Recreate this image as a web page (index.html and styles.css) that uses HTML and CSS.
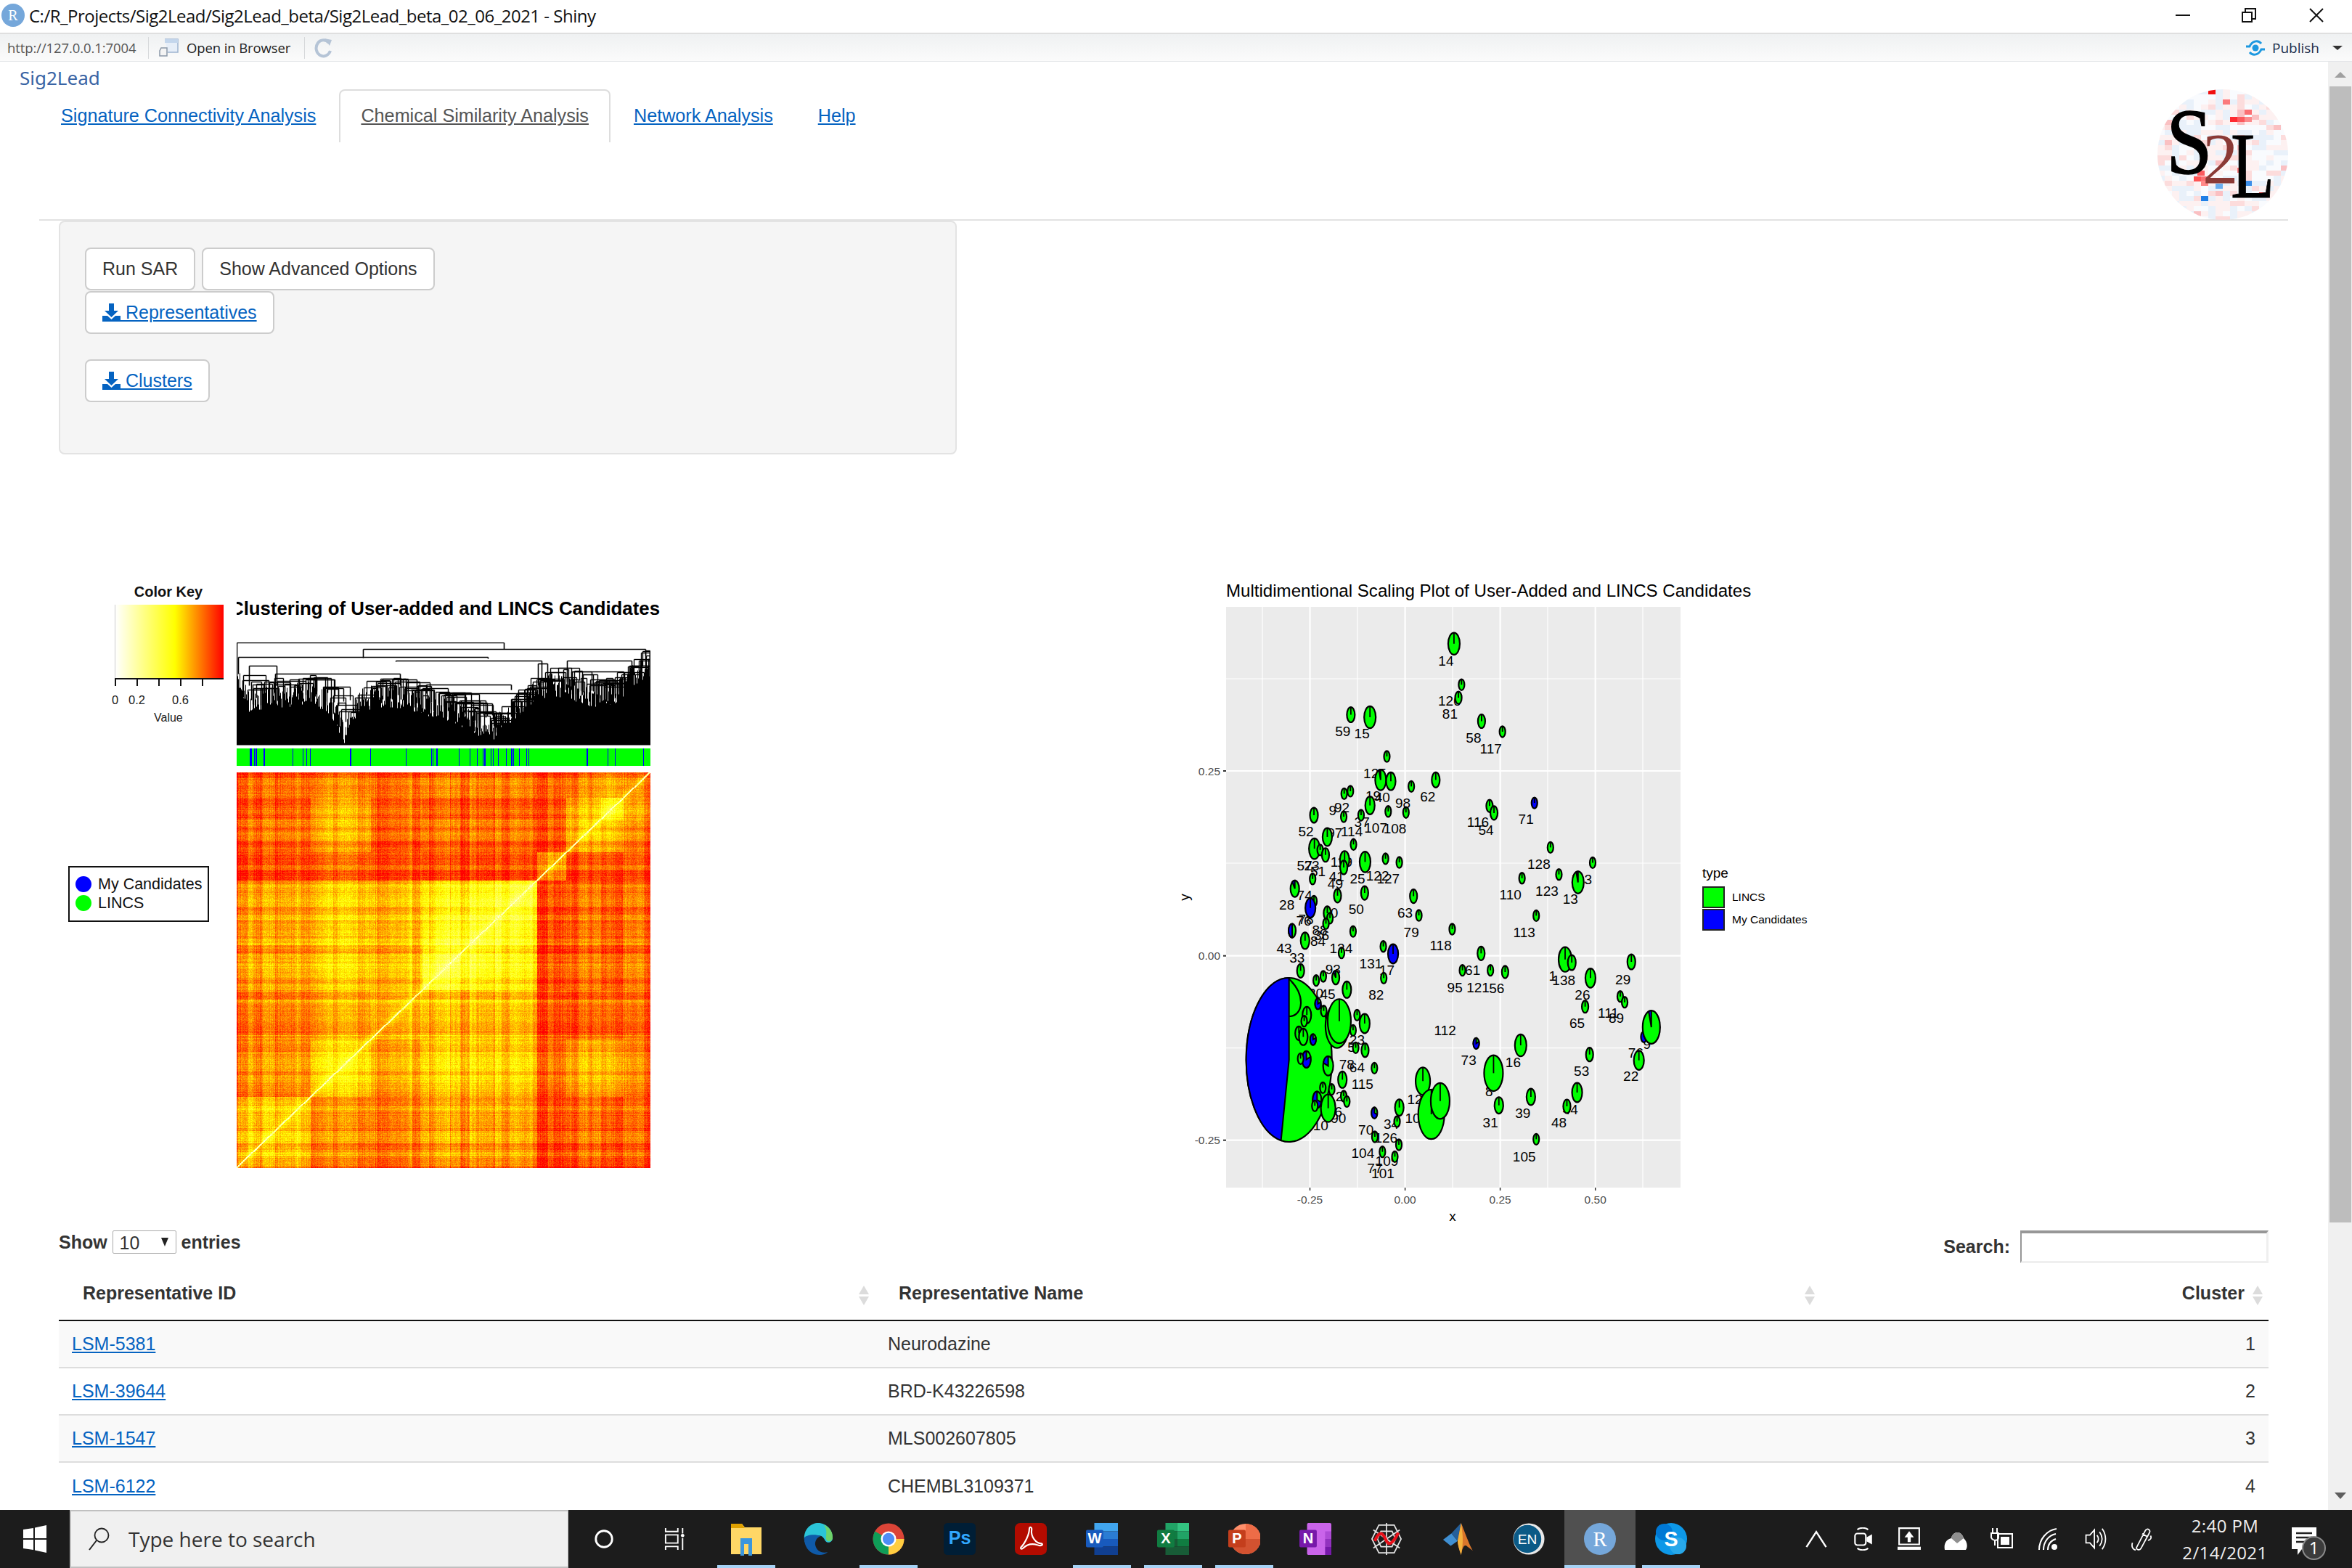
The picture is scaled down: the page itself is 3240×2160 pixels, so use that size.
FILE: index.html
```html
<!DOCTYPE html>
<html lang="en">
<head>
<meta charset="utf-8">
<title>Sig2Lead</title>
<link rel="stylesheet" href="styles.css">
</head>
<body>
<div class="window">
  <header class="titlebar">
    <svg class="r-icon" viewBox="0 0 32 32"><circle cx="16" cy="16" r="16" fill="#75a7da"/><text x="16" y="23" text-anchor="middle" class="r-letter">R</text></svg>
    <span class="title-text">C:/R_Projects/Sig2Lead/Sig2Lead_beta/Sig2Lead_beta_02_06_2021 - Shiny</span>
    <div class="win-controls">
      <svg viewBox="0 0 20 20" class="win-btn min"><path d="M0 10H20" stroke="#111" stroke-width="2"/></svg>
      <svg viewBox="0 0 20 20" class="win-btn restore"><path d="M1 6H14V19H1ZM5 6V1H19V15H14" fill="none" stroke="#111" stroke-width="2"/></svg>
      <svg viewBox="0 0 20 20" class="win-btn close"><path d="M1 1L19 19M19 1L1 19" stroke="#111" stroke-width="2"/></svg>
    </div>
  </header>
  <div class="toolbar">
    <span class="url">http://127.0.0.1:7004</span>
    <span class="tb-sep"></span>
    <svg class="tb-open" viewBox="0 0 28 28"><path d="M8 2H26V20H12" fill="#e6eef8" stroke="#9db4cf" stroke-width="1.5"/><path d="M8 2H26V7H8Z" fill="#c3d6ec"/><path d="M3 14H11V25H1V18Z" fill="#f4f4f4" stroke="#8b98a8" stroke-width="1.5"/></svg>
    <span class="open-text">Open in Browser</span>
    <span class="tb-sep second"></span>
    <svg class="tb-refresh" viewBox="0 0 26 28"><path d="M21 7A10 11 0 1 0 23 18" fill="none" stroke="#b5c4d6" stroke-width="4"/><path d="M15 1L25 3L22 11Z" fill="#b5c4d6"/></svg>
    <div class="publish">
      <svg class="pub-icon" viewBox="0 0 28 24"><path d="M1 10H6C9 3 17 0 22 6M27 14H22C19 21 11 24 6 18" fill="none" stroke="#1c98e0" stroke-width="3"/><circle cx="14" cy="12" r="4.5" fill="#1c98e0"/></svg>
      <span class="pub-text">Publish</span>
      <span class="pub-caret"></span>
    </div>
  </div>
  <div class="main">
    <div class="page">
      <div class="app-title">Sig2Lead</div>
      <nav class="tabs">
        <a class="tab" href="#">Signature Connectivity Analysis</a>
        <a class="tab active" href="#">Chemical Similarity Analysis</a>
        <a class="tab" href="#">Network Analysis</a>
        <a class="tab" href="#">Help</a>
        <div class="logo">
          <canvas id="logoCanvas" width="180" height="180"></canvas>
          <span class="logo-s">S</span><span class="logo-2">2</span><span class="logo-l">L</span>
        </div>
      </nav>
      <section class="well">
        <div class="btn-row">
          <a class="btn" href="#">Run SAR</a>
          <a class="btn" href="#">Show Advanced Options</a>
        </div>
        <div class="btn-row">
          <a class="btn dl" href="#"><svg class="dl-icon" viewBox="0 0 25 25"><path d="M9 0H16V10H22L12.500 19L3 10H9Z" fill="#0563c1"/><path d="M0 17H7L12.500 22L18 17H25V25H0Z" fill="#0563c1"/></svg> Representatives</a>
        </div>
        <div class="btn-row spaced">
          <a class="btn dl" href="#"><svg class="dl-icon" viewBox="0 0 25 25"><path d="M9 0H16V10H22L12.500 19L3 10H9Z" fill="#0563c1"/><path d="M0 17H7L12.500 22L18 17H25V25H0Z" fill="#0563c1"/></svg> Clusters</a>
        </div>
      </section>
      <section class="plots">
        <div class="heat-panel">
          <div class="key-title">Color Key</div>
          <div class="key-bar"></div>
          <div class="key-axis"><i></i><i></i><i></i><i></i><i></i></div>
          <span class="key-label k0">0</span><span class="key-label k2">0.2</span><span class="key-label k6">0.6</span>
          <span class="key-label kv">Value</span>
          <div class="heat-title"><span>Hierarchical Clustering of User-added and LINCS Candidates</span></div>
          <canvas id="heatCanvas" width="570" height="724"></canvas>
          <div class="heat-legend">
            <div class="hl-row"><i class="dot blue"></i>My Candidates</div>
            <div class="hl-row"><i class="dot green"></i>LINCS</div>
          </div>
        </div>
        <svg id="mds" class="mds" viewBox="1620 780 900 880"></svg>
      </section>
      <section class="dt">
        <div class="dt-top">
          <div class="dt-length">Show <span class="dt-select">10<i></i></span> entries</div>
          <div class="dt-search">Search: <span class="dt-input"></span></div>
        </div>
        <table class="dt-table">
          <colgroup><col class="c1"><col class="c2"><col class="c3"></colgroup>
          <thead>
            <tr>
              <th class="th1">Representative ID<span class="sort"></span></th>
              <th class="th2">Representative Name<span class="sort"></span></th>
              <th class="th3">Cluster<span class="sort"></span></th>
            </tr>
          </thead>
          <tbody>
            <tr><td><a href="#">LSM-5381</a></td><td>Neurodazine</td><td class="num">1</td></tr>
            <tr><td><a href="#">LSM-39644</a></td><td>BRD-K43226598</td><td class="num">2</td></tr>
            <tr><td><a href="#">LSM-1547</a></td><td>MLS002607805</td><td class="num">3</td></tr>
            <tr><td><a href="#">LSM-6122</a></td><td>CHEMBL3109371</td><td class="num">4</td></tr>
          </tbody>
        </table>
      </section>
    </div>
    <aside class="scrollbar">
      <span class="sb-up"></span>
      <span class="sb-thumb"></span>
      <span class="sb-down"></span>
    </aside>
  </div>
  <footer class="taskbar">
    <div class="start"><svg viewBox="0 0 32 38" class="win-logo"><path d="M0 6L14 4V18H0ZM16 3.500L32 0V18H16ZM0 20H14V34L0 32ZM16 20H32V38L16 34.500Z" fill="#fff"/></svg></div>
    <div class="searchbox">
      <svg class="search-ic" viewBox="0 0 30 32"><circle cx="19" cy="11" r="9.500" fill="none" stroke="#222" stroke-width="1.800"/><path d="M12 18L2 31" stroke="#222" stroke-width="2"/></svg>
      <span>Type here to search</span>
    </div>
    <div class="apps">
      <div class="slot"><svg viewBox="0 0 32 32" class="ic-s"><circle cx="16" cy="16" r="12" fill="none" stroke="#fff" stroke-width="3"/></svg></div>
      <div class="slot"><svg viewBox="0 0 32 32" class="ic-s"><path d="M2 0V5H20V0M2 10H20V22H2ZM2 32V27H20V32M27 0V8M27 15V32" fill="none" stroke="#fff" stroke-width="2"/><circle cx="27" cy="11" r="2.500" fill="#fff"/></svg></div>
      <div class="slot run e1"><svg viewBox="0 0 44 46" class="ic"><path d="M1 2H16L20 7H43V44H1Z" fill="#ffd766"/><path d="M1 2H16L20 8H1Z" fill="#e0a100"/><path d="M14 22H30V46H25V30H19V46H14Z" fill="#3a96dd"/></svg></div>
      <div class="slot"><svg viewBox="0 0 46 46" class="ic"><path d="M4 22C4 8 14 0 24 0C36 0 45 10 45 21C45 29 37 30 34 25C32 21 30 18 24 18C15 18 10 28 14 34C7 32 4 28 4 22Z" fill="#2bc4d8"/><path d="M45 21C45 10 38 5 32 3C39 10 34 20 36 24C38 28 45 27 45 21Z" fill="#6ed36a"/><path d="M4 22C4 36 14 46 26 46C31 46 35 44 38 42C28 44 22 40 20 32C19 27 22 20 28 19C18 15 5 18 4 22Z" fill="#0f5aa8"/></svg></div>
      <div class="slot run"><svg viewBox="0 0 46 46" class="ic"><circle cx="23" cy="23" r="22.500" fill="#db4437"/><path d="M23 23L3.500 12A22.500 22.500 0 0 0 23 45.500L34 26Z" fill="#0f9d58"/><path d="M23 23H45.500A22.500 22.500 0 0 1 23 45.500Z" fill="#ffcd40"/><circle cx="23" cy="23" r="11" fill="#fff"/><circle cx="23" cy="23" r="8.500" fill="#4e8df5"/></svg></div>
      <div class="slot"><svg viewBox="0 0 42 42" class="ic"><rect width="42" height="42" rx="5" fill="#001e36"/><text x="21" y="28" text-anchor="middle" class="ps">Ps</text></svg></div>
      <div class="slot"><svg viewBox="0 0 42 42" class="ic"><rect width="42" height="42" rx="7" fill="#b30b00"/><path d="M8 32C14 26 19 14 19 8C19 4 23 5 22 10C21 17 27 27 35 27C38 28 35 31 30 29C24 27 17 27 11 33C9 35 7 34 8 32Z" fill="none" stroke="#fff" stroke-width="2"/></svg></div>
      <div class="slot run"><svg viewBox="0 0 46 46" class="ic"><path d="M12 0H46V12H12Z" fill="#41a5ee"/><path d="M12 12H46V23H12Z" fill="#2b7cd3"/><path d="M12 23H46V34H12Z" fill="#185abd"/><path d="M12 34H46V46H12Z" fill="#103f91"/><rect y="10" width="25" height="25" rx="2" fill="#185abd"/><text x="12.500" y="29" text-anchor="middle" class="letter">W</text></svg></div>
      <div class="slot run"><svg viewBox="0 0 46 46" class="ic"><path d="M12 0H29V12H12Z" fill="#21a366"/><path d="M29 0H46V12H29Z" fill="#33c481"/><path d="M12 12H29V23H12Z" fill="#107c41"/><path d="M29 12H46V23H29Z" fill="#21a366"/><path d="M12 23H29V34H12Z" fill="#185c37"/><path d="M29 23H46V34H29Z" fill="#107c41"/><path d="M12 34H46V46H12Z" fill="#185c37"/><rect y="10" width="25" height="25" rx="2" fill="#107c41"/><text x="12.500" y="29" text-anchor="middle" class="letter">X</text></svg></div>
      <div class="slot run"><svg viewBox="0 0 46 46" class="ic"><circle cx="25" cy="23" r="22" fill="#ff8f6b"/><path d="M25 23H47A22 22 0 0 1 3 23Z" fill="#d35230"/><path d="M25 1A22 22 0 0 1 47 23H25Z" fill="#ed6c47"/><rect y="10" width="25" height="25" rx="2" fill="#c43e1c"/><text x="12.500" y="29" text-anchor="middle" class="letter">P</text></svg></div>
      <div class="slot"><svg viewBox="0 0 46 46" class="ic"><rect x="11" width="35" height="46" rx="2" fill="#ca64ea"/><rect x="37" y="12" width="9" height="11" fill="#ae4bd5"/><rect x="37" y="23" width="9" height="11" fill="#9332bf"/><rect x="37" y="34" width="9" height="12" fill="#7719aa"/><rect y="10" width="25" height="25" rx="2" fill="#7719aa"/><text x="12.500" y="29" text-anchor="middle" class="letter">N</text></svg></div>
      <div class="slot"><svg viewBox="0 0 46 46" class="ic"><path d="M23 0V46M4 10L42 36M42 10L4 36M12 3L34 3L44 23L34 43H12L2 23ZM15 12H31L36 23L31 34H15L10 23Z" fill="none" stroke="#e6e6e6" stroke-width="1.800"/><path d="M6 26C12 12 17 12 22 24C26 34 32 30 40 14" fill="none" stroke="#e8101a" stroke-width="4.500"/></svg></div>
      <div class="slot"><svg viewBox="0 0 46 46" class="ic"><path d="M2 24L14 15L23 26L13 33Z" fill="#3f8fd2"/><path d="M14 15L28 0L23 26Z" fill="#245f9a"/><path d="M28 0C32 10 40 32 45 40L37 34C33 30 30 34 28 46C25 38 23 30 23 26Z" fill="#d9762b"/><path d="M28 0C30 14 32 26 28 46C25 38 23 30 23 26Z" fill="#f4b23d"/></svg></div>
      <div class="slot"><svg viewBox="0 0 46 46" class="ic"><circle cx="23" cy="23" r="22.500" fill="#e8e8e8"/><circle cx="21" cy="23" r="20" fill="#0b5a86"/><text x="21" y="30" text-anchor="middle" class="en">EN</text></svg></div>
      <div class="slot active-app"><svg viewBox="0 0 46 46" class="ic"><circle cx="23" cy="23" r="23" fill="#75a7da"/><text x="23" y="33" text-anchor="middle" class="r-big">R</text></svg></div>
      <div class="slot run"><svg viewBox="0 0 46 46" class="ic"><circle cx="23" cy="23" r="23" fill="#0d98e8"/><circle cx="13" cy="13" r="12" fill="#0078d4"/><circle cx="33" cy="33" r="12" fill="#28a8ea"/><text x="23" y="33" text-anchor="middle" class="sk">S</text></svg></div>
    </div>
    <div class="tray">
      <div class="tslot"><svg viewBox="0 0 26 24" class="tic"><path d="M2 21L13 4L24 21" fill="none" stroke="#fff" stroke-width="2"/></svg></div>
      <div class="tslot"><svg viewBox="0 0 26 30" class="tic"><path d="M6 3C10 0 16 0 20 3M6 27C10 30 16 30 20 27" fill="none" stroke="#fff" stroke-width="2"/><rect x="3" y="8" width="14" height="15" rx="3" fill="none" stroke="#fff" stroke-width="2"/><path d="M18 13L25 9V22L18 18Z" fill="#fff"/></svg></div>
      <div class="tslot"><svg viewBox="0 0 30 30" class="tic"><path d="M2 1H28V22H2Z" fill="none" stroke="#fff" stroke-width="2"/><path d="M15 5L21 13H17V19H13V13H9Z" fill="#fff"/><path d="M0 25H30V29H0Z" fill="#fff"/></svg></div>
      <div class="tslot"><svg viewBox="0 0 32 30" class="tic"><path d="M1 30C-1 20 5 15 10 14C12 4 24 3 27 14C32 18 33 26 30 30Z" fill="#fff"/><path d="M10 14C12 4 24 3 27 14L18 21Z" fill="#8f8f8f"/></svg></div>
      <div class="tslot"><svg viewBox="0 0 32 30" class="tic"><path d="M10 8H30V27H10Z" fill="none" stroke="#fff" stroke-width="2"/><path d="M14 12H26V23H14Z" fill="#fff"/><path d="M3 0V7M9 0V7M1 7H11V13C11 18 3 18 1 13ZM6 17V24" fill="none" stroke="#fff" stroke-width="2"/></svg></div>
      <div class="tslot"><svg viewBox="0 0 30 32" class="tic"><path d="M2 31C2 17 12 4 26 2M8 31C8 20 15 11 25 9M14 31C14 23 19 18 25 16" fill="none" stroke="#fff" stroke-width="2"/><circle cx="23" cy="27" r="4" fill="#fff"/></svg></div>
      <div class="tslot"><svg viewBox="0 0 32 36" class="tic"><path d="M2 12H8L15 4V32L8 24H2Z" fill="none" stroke="#fff" stroke-width="2"/><path d="M19 12C22 16 22 20 19 24M23 7C28 14 28 22 23 29M27 2C34 12 34 24 27 34" fill="none" stroke="#fff" stroke-width="2"/></svg></div>
      <div class="tslot"><svg viewBox="0 0 32 36" class="tic"><path d="M8 32L22 5C25 0 31 4 28 9L15 33C13 36 9 35 8 32ZM17 10L26 15M2 24C0 30 3 35 7 35M26 20C30 20 32 16 30 13" fill="none" stroke="#fff" stroke-width="2"/></svg></div>
    </div>
    <div class="clock"><span>2:40 PM</span><span>2/14/2021</span></div>
    <div class="notif">
      <svg viewBox="0 0 34 40" class="notif-ic"><path d="M0 0H34V30H14L8 38V30H0Z" fill="#fff"/><path d="M6 8H28M6 14H28M6 20H22" stroke="#222" stroke-width="2.500"/></svg>
      <span class="notif-badge">1</span>
    </div>
  </footer>
</div>
<script src="script.js"></script>
</body>
</html>
```
FILE: styles.css
```css
* { box-sizing: border-box; }
html, body { margin: 0; padding: 0; background: #fff; }
body { font-family: "Liberation Sans", Arial, sans-serif; font-size: 25px; color: #333; }
a { color: #0563c1; }
.window { width: 3240px; height: 2160px; display: flex; flex-direction: column; overflow: hidden; }

.titlebar { height: 47px; flex: none; display: flex; align-items: center; padding: 0 0 3px 2px; border-bottom: 2px solid #dfdfdf; background: #fff; }
.r-icon { width: 32px; height: 32px; }
.r-letter { font: 20px "Liberation Serif", serif; fill: #fff; }
.title-text { margin-left: 6px; font: 24px "Open Sans", sans-serif; color: #111; white-space: nowrap; letter-spacing: -.5px; }
.win-controls { margin-left: auto; display: flex; align-items: center; }
.win-btn { width: 20px; height: 20px; }
.win-btn.min { margin-right: 71px; }
.win-btn.restore { margin-right: 73px; }
.win-btn.close { margin-right: 39px; }

.toolbar { height: 38px; flex: none; display: flex; align-items: center; background: linear-gradient(#eff1f2, #fbfbfb); border-bottom: 1px solid #e3e5e8; padding-left: 10px; font-family: "Open Sans", sans-serif; }
.url { font-size: 18.500px; color: #555; width: 194px; white-space: nowrap; letter-spacing: -.1px; }
.tb-sep { width: 1px; height: 30px; background: #d6d8da; margin-right: 14px; }
.tb-sep.second { margin-left: 19px; margin-right: 12px; }
.tb-open { width: 28px; height: 28px; }
.open-text { margin-left: 10px; font-size: 18.500px; color: #222; white-space: nowrap; letter-spacing: -.1px; }
.tb-refresh { width: 26px; height: 28px; }
.publish { margin-left: auto; display: flex; align-items: center; padding-right: 13px; }
.pub-icon { width: 28px; height: 24px; }
.pub-text { margin-left: 9px; font-size: 19px; color: #1a2c4a; }
.pub-caret { margin-left: 18px; border-left: 7px solid transparent; border-right: 7px solid transparent; border-top: 6px solid #333; }

.main { height: 1995px; flex: none; display: flex; }
.page { width: 3207px; flex: none; overflow: hidden; }
.app-title { height: 38px; padding-left: 27px; font: 26px/44px "Noto Sans", sans-serif; color: #3a64a4; }

.tabs { position: relative; height: 181px; margin: 0 55px 0 54px; display: flex; align-items: flex-start; gap: 2px; border-bottom: 2px solid #e2e2e2; }
.tab { height: 73px; line-height: 69px; padding: 0 28px; border: 2px solid transparent; border-bottom: 0; white-space: nowrap; font-size: 25.200px; }
.tab.active { color: #555; border-color: #ddd; border-radius: 8px 8px 0 0; }
.logo { position: absolute; right: 0; top: 0; width: 180px; height: 180px; }
#logoCanvas { display: block; width: 180px; height: 180px; border-radius: 50%; }
.logo span { position: absolute; font-family: "Liberation Serif", serif; line-height: 1; color: #000; transform-origin: left top; }
.logo-s { left: 12px; top: 7px; font-size: 130px; transform: scaleX(.88); -webkit-text-stroke: 1.500px #000; }
.logo .logo-2 { left: 62px; top: 46px; font-size: 99px; color: #8b3a36; }
.logo-l { left: 101px; top: 40px; font-size: 130px; transform: scaleX(.76); -webkit-text-stroke: 1px #000; }

.well { width: 1237px; height: 322px; margin-left: 81px; padding: 35px 34px; background: #f5f5f5; border: 2px solid #e3e3e3; border-radius: 8px; }
.btn-row { display: flex; gap: 9px; height: 59px; margin-bottom: 1px; }
.btn-row.spaced { margin-top: 35px; }
.btn { display: flex; align-items: center; height: 59px; padding: 0 22px; background: #fff; border: 2px solid #ccc; border-radius: 8px; color: #333; text-decoration: none; font-size: 25px; white-space: pre; }
.btn.dl { color: #0563c1; text-decoration: underline; }
.dl-icon { width: 25px; height: 25px; }

.plots { height: 880px; margin-top: 154px; display: flex; }
.heat-panel { position: relative; width: 1620px; height: 880px; flex: none; }
.key-title { position: absolute; left: 157px; top: 24px; width: 150px; text-align: center; font-weight: 700; font-size: 20px; color: #111; }
.key-bar { position: absolute; left: 158px; top: 53px; width: 150px; height: 102px; background: linear-gradient(90deg, #fff, #ff0 55%, #f00); border-left: 1px solid #ccc; }
.key-axis { position: absolute; left: 158px; top: 154px; display: flex; gap: 28px; height: 11px; width: 150px; border-top: 2px solid #111; }
.key-axis i { width: 2px; background: #111; }
.key-label { position: absolute; font-size: 16.500px; color: #222; line-height: 20px; }
.k0 { left: 154px; top: 174px; }
.k2 { left: 177px; top: 174px; }
.k6 { left: 237px; top: 174px; }
.kv { left: 212px; top: 199px; font-size: 16px; }
.heat-title { position: absolute; left: 326px; top: 36px; width: 583px; height: 44px; overflow: hidden; display: flex; justify-content: flex-end; align-items: center; font-weight: 700; font-size: 25.800px; color: #000; white-space: nowrap; }
.heat-title span { flex: none; }
#heatCanvas { position: absolute; left: 326px; top: 105px; width: 570px; height: 724px; }
.heat-legend { position: absolute; left: 94px; top: 413px; width: 194px; height: 77px; padding: 10px 0 0 8px; background: #fff; border: 2px solid #111; font-size: 21.500px; color: #111; }
.hl-row { display: flex; align-items: center; height: 26px; white-space: nowrap; }
.dot { width: 22px; height: 22px; border-radius: 50%; margin-right: 9px; flex: none; }
.dot.blue { background: #00f; }
.dot.green { background: #0f0; }
.mds { width: 900px; height: 880px; flex: none; display: block; overflow: visible; }
.mds text { font-family: "Liberation Sans", Arial, sans-serif; }
.mds .lab { font-size: 19px; fill: #000; text-anchor: middle; dominant-baseline: central; }
.mds .tick { font-size: 15.500px; fill: #4d4d4d; dominant-baseline: central; }
.mds .ttl { font-size: 24.100px; fill: #000; dominant-baseline: central; }
.mds .axis { font-size: 19px; fill: #000; text-anchor: middle; dominant-baseline: central; }
.mds .legt { font-size: 19px; fill: #000; dominant-baseline: central; }
.mds .legl { font-size: 15.500px; fill: #000; dominant-baseline: central; }

.dt { margin: 0 82px 0 81px; }
.dt-top { height: 85px; display: flex; justify-content: space-between; align-items: flex-start; padding-top: 35px; font-weight: 700; }
.dt-length { display: flex; align-items: center; height: 32px; white-space: pre; }
.dt-select { position: relative; display: inline-block; width: 88px; height: 32px; padding-left: 9px; line-height: 32px; font-weight: 400; border: 1px solid #aaa; border-radius: 2px; background: #fff; }
.dt-select i { position: absolute; right: 10px; top: 9px; border-left: 5px solid transparent; border-right: 5px solid transparent; border-top: 12px solid #222; }
.dt-search { display: flex; align-items: center; height: 45px; padding-bottom: 1px; }
.dt-input { width: 342px; height: 45px; margin-left: 14px; background: #fff; border: 3px solid #efefef; border-top: 4px solid #979797; border-left: 2px solid #979797; }
.dt-table { width: 3044px; border-collapse: collapse; table-layout: fixed; }
.c1 { width: 1124px; }
.c2 { width: 1303px; }
.c3 { width: 617px; }
.dt-table th { position: relative; height: 74px; text-align: left; font-size: 25px; padding: 0 0 0 33px; border-bottom: 2px solid #111; color: #333; }
.dt-table .th3 { text-align: right; padding: 0 33px 0 0; }
.sort { position: absolute; right: 8px; top: 26px; width: 14px; height: 27px; }
.sort::before, .sort::after { content: ""; position: absolute; left: 0; border-left: 7px solid transparent; border-right: 7px solid transparent; }
.sort::before { top: 0; border-bottom: 12px solid #dcdcdc; }
.sort::after { bottom: 0; border-top: 12px solid #dcdcdc; }
.dt-table td { height: 65px; padding: 0 18px; border-bottom: 2px solid #ddd; font-size: 25px; color: #333; white-space: nowrap; }
.dt-table tbody tr:nth-child(odd) td { background: #f9f9f9; }
.dt-table .num { text-align: right; }
.dt-table tbody tr:last-child td { border-bottom: 0; }

.scrollbar { width: 33px; flex: none; position: relative; background: #f0f0f0; display: flex; flex-direction: column; align-items: center; }
.sb-up { margin-top: 14px; border-left: 8px solid transparent; border-right: 8px solid transparent; border-bottom: 8px solid #a0a0a0; }
.sb-thumb { margin-top: 12px; width: 30px; height: 1565px; background: #bdbdbd; }
.sb-down { margin-top: 372px; border-left: 8px solid transparent; border-right: 8px solid transparent; border-top: 9px solid #5e5e5e; }

.taskbar { height: 80px; flex: none; display: flex; align-items: stretch; background: #1c1c1c; color: #fff; font-family: "Open Sans", sans-serif; }
.start { width: 96px; flex: none; display: flex; align-items: center; justify-content: center; }
.win-logo { width: 32px; height: 38px; }
.searchbox { width: 687px; flex: none; display: flex; align-items: center; padding-left: 23px; background: #f0f0f0; border: 2px solid #c0c0c0; border-right-width: 1px; color: #333; font-size: 28px; }
.search-ic { width: 30px; height: 32px; margin-right: 26px; }
.apps { display: flex; flex: none; }
.slot { position: relative; width: 98px; display: flex; align-items: center; justify-content: center; }
.ic { width: 44px; height: 46px; }
.ic-s { width: 30px; height: 30px; }
.slot.run::after, .slot.active-app::after { content: ""; position: absolute; left: 9px; right: 9px; bottom: 0; height: 4px; background: #a6d2f5; }
.slot.active-app { background: #505050; }
.slot.active-app::after { left: 0; right: 0; }
.ps { font: 700 24px "Liberation Sans", sans-serif; fill: #31a8ff; }
.letter { font: 700 21px "Liberation Sans", sans-serif; fill: #fff; }
.en { font: 20px "Liberation Sans", sans-serif; fill: #fff; }
.r-big { font: 30px "Liberation Serif", serif; fill: #fff; }
.sk { font: 700 30px "Liberation Sans", sans-serif; fill: #fff; }
.tray { display: flex; flex: none; margin-left: 119px; width: 512px; }
.tslot { width: 64px; display: flex; align-items: center; justify-content: center; }
.tic { width: 32px; height: 32px; }
.clock { width: 166px; flex: none; display: flex; flex-direction: column; align-items: center; justify-content: center; gap: 12px; font-size: 24px; line-height: 25px; color: #eee; letter-spacing: .4px; white-space: nowrap; }
.notif { position: relative; width: 92px; flex: none; }
.notif-ic { position: absolute; left: 9px; top: 24px; width: 34px; height: 40px; }
.notif-badge { position: absolute; left: 23px; top: 36px; width: 33px; height: 33px; border-radius: 50%; background: #3c3c3c; border: 2px solid #8a8a8a; text-align: center; line-height: 28px; font-size: 24px; color: #fff; }
```
FILE: script.js
```js
function rng(seed) {
  return function () {
    seed = (seed + 0x6D2B79F5) | 0;
    var t = Math.imul(seed ^ (seed >>> 15), 1 | seed);
    t = (t + Math.imul(t ^ (t >>> 7), 61 | t)) ^ t;
    return ((t ^ (t >>> 14)) >>> 0) / 4294967296;
  };
}

function drawLogo() {
  var c = document.getElementById('logoCanvas').getContext('2d');
  var r = rng(7);
  c.fillStyle = '#fff';
  c.fillRect(0, 0, 180, 180);
  for (var y = 0; y < 180; y += 7) {
    for (var x = 0; x < 180; x += 10) {
      var v = r();
      if (v < 0.3) c.fillStyle = '#f9fbfe';
      else if (v < 0.6) c.fillStyle = '#e9f1fa';
      else if (v < 0.85) c.fillStyle = '#fdf1f1';
      else if (v < 0.97) c.fillStyle = '#fcdcdc';
      else c.fillStyle = '#fac0c2';
      c.fillRect(x, y, 10, 7);
    }
  }
  var hot = [[70,0,'#f01010'],[90,14,'#fb7a7c'],[120,28,'#fb6f72'],[100,38,'#ff2a30'],[110,38,'#fb5a5e'],[120,38,'#fb8b8c'],[55,112,'#fb5a5e'],[50,120,'#f55'],[110,108,'#fb7a7c'],[60,120,'#fb6f72'],[60,126,'#f88'],[120,126,'#3c8fe8'],[60,147,'#1f7fe6'],[80,130,'#6aaef0'],[140,142,'#ef2020']];
  hot.forEach(function (h) { c.fillStyle = h[2]; c.fillRect(h[0], h[1], 10, 7); });
}

function drawHeat() {
  var cv = document.getElementById('heatCanvas');
  var c = cv.getContext('2d');
  var W = 570, H = 724, top = 179, hh = 545;
  var r = rng(42);
  c.fillStyle = '#fff';
  c.fillRect(0, 0, W, H);

  // dendrogram, coordinates taken along a 1039 x 259 frame
  var sx = function (z) { return (z - 449) / 1.823; };
  var sy = function (z) { return (z - 192) / 1.823; };
  var prof = [[449,265],[480,320],[560,310],[640,300],[690,340],[720,400],[760,320],[800,310],[860,310],[920,330],[960,340],[1000,350],[1050,380],[1090,410],[1110,370],[1150,340],[1200,300],[1240,280],[1290,290],[1340,310],[1400,300],[1440,260],[1475,240],[1488,230]];
  var profAt = function (z) {
    for (var i = 1; i < prof.length; i++) {
      if (z <= prof[i][0]) {
        var a = prof[i - 1], b = prof[i];
        return a[1] + (b[1] - a[1]) * (z - a[0]) / (b[0] - a[0]);
      }
    }
    return 230;
  };
  c.strokeStyle = '#000';
  var line = function (x1, y1, x2, y2) {
    c.beginPath();
    c.moveTo(Math.round(x1) + 0.5, Math.round(y1) + 0.5);
    c.lineTo(Math.round(x2) + 0.5, Math.round(y2) + 0.5);
    c.stroke();
  };
  var bracket = function (a, b, y, da, db) {
    line(sx(a), sy(y), sx(b), sy(y));
    line(sx(a), sy(y), sx(a), sy(da));
    line(sx(b), sy(y), sx(b), sy(db));
  };
  c.lineWidth = 1.6;
  bracket(449, 1120, 192, 300, 208);
  bracket(767, 1475, 208, 230, 225);
  bracket(452, 1080, 229, 270, 232);
  bracket(849, 1215, 238, 240, 300);
  bracket(480, 550, 250, 300, 300);
  bracket(545, 860, 270, 300, 300);
  bracket(1278, 1440, 237, 290, 260);
  bracket(1290, 1420, 265, 310, 300);
  bracket(925, 1138, 297, 320, 310);
  bracket(955, 1178, 320, 345, 340);
  bracket(1205, 1230, 245, 300, 290);
  bracket(1000, 1090, 345, 400, 375);
  var i, z;
  c.lineWidth = 1.4;
  for (i = 0; i < 170; i++) {
    z = 455 + r() * 1025;
    var w = 12 + r() * 60;
    var y = profAt(z) - 2 - r() * 28;
    bracket(z, Math.min(1487, z + w), y, y + 30 + r() * 30, y + 30 + r() * 30);
  }
  c.lineWidth = 1;
  for (z = 449; z < 1488; z += 1.823) {
    var t = profAt(z) + 10 + (r() - 0.4) * 60;
    line(sx(z), sy(t), sx(z), 141);
  }

  // annotation strip
  c.fillStyle = '#00ff00';
  c.fillRect(0, 146, W, 24);
  c.fillStyle = '#0000ff';
  [482,485,492,496,499,516,590,615,624,634,734,785,874,937,942,951,1007,1035,1052,1067,1070,1087,1092,1105,1125,1139,1143,1158,1176,1181,1327,1381,1399,1470].forEach(function (b, n) {
    var bw = (n % 5 === 0) ? 2 : 1;
    c.fillRect(Math.round(sx(b)), 146, bw, 24);
  });

  // similarity matrix
  var cuts = [0, 0.178, 0.323, 0.448, 0.726, 0.795, 0.88, 0.935, 1];
  var M = [
    [0.60, 0.74, 0.74, 0.70, 0.84, 0.80, 0.88, 0.83],
    [0.74, 0.60, 0.68, 0.64, 0.80, 0.70, 0.74, 0.80],
    [0.74, 0.68, 0.62, 0.64, 0.82, 0.82, 0.85, 0.82],
    [0.70, 0.64, 0.64, 0.58, 0.86, 0.82, 0.90, 0.82],
    [0.84, 0.80, 0.82, 0.86, 0.66, 0.84, 0.88, 0.84],
    [0.80, 0.70, 0.82, 0.82, 0.84, 0.66, 0.70, 0.80],
    [0.88, 0.74, 0.85, 0.90, 0.88, 0.70, 0.58, 0.76],
    [0.83, 0.80, 0.82, 0.82, 0.84, 0.80, 0.76, 0.82]
  ];
  var N = W;
  var off = new Float32Array(N), group = new Int32Array(N);
  var p = 0;
  while (p < N) {
    var run = 1 + Math.floor(r() * r() * 22);
    var o = (r() - 0.5) * 0.15;
    for (i = p; i < Math.min(N, p + run); i++) off[i] = o + (r() - 0.5) * 0.09;
    p += run;
  }
  for (i = 0; i < N; i++) {
    var f = i / N, g = 0;
    while (g < 7 && f >= cuts[g + 1]) g++;
    group[i] = g;
    if (f > 0.726 && f < 0.752) off[i] += 0.1;
    if (f < 0.012 || f > 0.985) off[i] += 0.1;
  }
  var img = c.createImageData(W, hh), d = img.data;
  for (var yy = 0; yy < hh; yy++) {
    var j = Math.floor((hh - 1 - yy) / hh * N);
    for (var xx = 0; xx < W; xx++) {
      var dist = Math.abs(xx - j);
      var v = M[group[xx]][group[j]] + off[xx] + off[j] + (r() - 0.5) * 0.14;
      if (group[xx] === 3 && group[j] === 3) v -= 0.12 * Math.exp(-Math.pow(dist / 70, 2));
      v -= 0.08 * Math.exp(-Math.pow(dist / 8, 2));
      if (dist <= 1) v = 0.05 + r() * 0.25;
      v = Math.max(0, Math.min(1, v));
      var n = (yy * W + xx) * 4;
      d[n] = 255;
      if (v < 0.5) { d[n + 1] = 255; d[n + 2] = Math.round(255 * (1 - v / 0.5)); }
      else { d[n + 1] = Math.round(255 * (1 - (v - 0.5) / 0.5)); d[n + 2] = 0; }
      d[n + 3] = 255;
    }
  }
  c.putImageData(img, 0, top);
}

function drawMds() {
  var svg = document.getElementById('mds');
  var NS = 'http://www.w3.org/2000/svg';
  var el = function (name, attrs, text) {
    var e = document.createElementNS(NS, name);
    for (var k in attrs) e.setAttribute(k, attrs[k]);
    if (text !== undefined) e.textContent = text;
    svg.appendChild(e);
    return e;
  };
  var X = function (z) { return 1600 + z / 1.633; };
  var Y4 = function (z) { return 780 + z / 2.904; };
  var Y5 = function (z) { return 1300 + z / 3; };

  el('rect', { x: 1689, y: 836, width: 626, height: 800, fill: '#ebebeb' });
  [1739, 1870, 2001, 2132, 2263].forEach(function (x) { el('line', { x1: x, x2: x, y1: 836, y2: 1636, stroke: '#fff', 'stroke-width': 1.2 }); });
  [935, 1189, 1443.7].forEach(function (y) { el('line', { x1: 1689, x2: 2315, y1: y, y2: y, stroke: '#fff', 'stroke-width': 1.2 }); });
  [1804.5, 1935.6, 2066.6, 2197.7].forEach(function (x, n) {
    el('line', { x1: x, x2: x, y1: 836, y2: 1636, stroke: '#fff', 'stroke-width': 2.2 });
    el('line', { x1: x, x2: x, y1: 1636, y2: 1640, stroke: '#333', 'stroke-width': 1.5 });
    el('text', { x: x, y: 1652, 'text-anchor': 'middle', class: 'tick' }, ['-0.25', '0.00', '0.25', '0.50'][n]);
  });
  [1062, 1316.7, 1570.7].forEach(function (y, n) {
    el('line', { x1: 1689, x2: 2315, y1: y, y2: y, stroke: '#fff', 'stroke-width': 2.2 });
    el('line', { x1: 1685, x2: 1689, y1: y, y2: y, stroke: '#333', 'stroke-width': 2 });
    el('text', { x: 1681, y: y, 'text-anchor': 'end', class: 'tick' }, ['0.25', '0.00', '-0.25'][n]);
  });
  el('text', { x: 1689, y: 813, class: 'ttl' }, 'Multidimentional Scaling Plot of User-Added and LINCS Candidates');
  el('text', { x: 2001, y: 1675, class: 'axis' }, 'x');
  el('text', { x: 1631, y: 1236, class: 'axis', transform: 'rotate(-90 1631 1236)' }, 'y');

  var lab4 = '14 640 378,126 648 540,81 649 592,59 408 662,15 451 670,58 702 686,117 741 730,125 480 828,62 599 922,19 476 920,40 497 925,98 543 948,9 385 978,92 406 966,116 712 1025,54 730 1055,71 820 1013,37 451 1024,107 482 1048,108 525 1050,52 325 1062,97 390 1068,114 428 1062,119 405 1182,128 849 1192,57 322 1198,23 338 1198,51 352 1222,41 394 1242,25 441 1250,122 486 1238,127 510 1250,49 391 1270,3 960 1252,1 930 1250,110 785 1315,123 867 1300,13 920 1332,74 322 1316,28 282 1356,50 438 1372,63 548 1388,90 380 1388,79 562 1464,113 816 1466,76 320 1420,78 325 1412,88 356 1455,36 360 1478,84 352 1500,118 628 1518,43 276 1528,124 404 1528';
  var lab5 = '33 305 57,131 471 82,17 507 110,93 386 105,61 700 110,95 660 180,121 712 182,56 754 185,1 880 132,138 905 150,29 1038 148,30 347 205,45 374 207,82 483 210,26 947 212,111 1005 285,89 1023 308,65 935 328,112 638 357,23 440 398,5 427 428,9 1092 415,76 1067 452,73 691 480,16 791 490,78 417 498,64 440 510,53 945 527,22 1056 548,115 452 580,8 737 610,12 570 642,2 400 632,10 565 722,39 813 700,44 920 685,48 894 740,31 740 738,6 398 695,90 398 720,10 358 750,34 517 745,70 460 768,126 505 802,104 453 866,109 507 898,77 480 928,101 498 950,105 816 880';
  lab4.split(',').forEach(function (s) { var a = s.split(' '); el('text', { x: X(+a[1]), y: Y4(+a[2]), class: 'lab' }, a[0]); });
  lab5.split(',').forEach(function (s) { var a = s.split(' '); el('text', { x: X(+a[1]), y: Y5(+a[2]), class: 'lab' }, a[0]); });

  var pie = function (cx, cy, rx, ry, blue) {
    el('ellipse', { cx: cx, cy: cy, rx: rx, ry: ry, fill: blue >= 1 ? '#00f' : '#0f0', stroke: '#000', 'stroke-width': 2.2 });
    if (blue > 0 && blue < 1) {
      var a = blue * 2 * Math.PI;
      var ex = cx - rx * Math.sin(a), ey = cy - ry * Math.cos(a);
      var large = blue > 0.5 ? 1 : 0;
      el('path', { d: 'M' + cx + ' ' + cy + 'L' + cx + ' ' + (cy - ry) + 'A' + rx + ' ' + ry + ' 0 ' + large + ' 0 ' + ex + ' ' + ey + 'Z', fill: '#00f', stroke: '#000', 'stroke-width': 2 });
    } else {
      el('line', { x1: cx, y1: cy, x2: cx, y2: cy - ry, stroke: '#000', 'stroke-width': 1.8 });
    }
  };

  pie(1775.7, 1460, 59, 113, 0.47);
  el('path', { d: 'M1775 1348C1800 1370 1795 1400 1776 1400', fill: 'none', stroke: '#000', 'stroke-width': 2.2 });

  var p4 = [[658,310,8],[675,474,4],[668,526,4.5],[426,594,5.5],[469,604,8],[720,620,5],[767,662,4],[507,761,4],[493,855,7.5,.05],[516,860,6.5],[617,855,5.5],[562,881,4],[411,910,4],[425,900,4],[469,957,6.5],[738,959,4.5],[748,987,5],[839,947,4,1],[343,996,5.5],[410,1002,4],[449,996,4],[510,981,4],[550,985,4],[373,1083,6.5],[432,1113,4],[344,1130,7.5],[357,1135,4],[369,1155,5],[412,1175,6.5],[458,1183,7.5],[504,1170,4],[535,1185,4],[875,1125,4],[970,1186,4],[894,1233,4],[811,1248,4],[937,1265,8,.05],[410,1205,5],[340,1251,4],[300,1290,6,.1],[396,1318,5],[457,1307,5],[567,1320,5],[343,1340,4],[335,1367,7,1],[373,1388,5],[379,1408,4],[370,1430,4],[579,1397,4],[843,1398,4],[654,1452,4],[431,1461,4],[294,1458,5,.5],[323,1498,6],[499,1521,4]];
  var p5 = [[405,38,4],[521,42,7,1],[719,40,5],[908,65,9],[923,78,5.5],[1057,75,5.5],[313,112,5],[364,135,4],[348,152,4],[392,140,5,.1],[500,142,4],[677,110,4],[740,110,4],[773,117,4.5],[965,142,7],[417,190,6],[352,248,4,.8],[365,278,4],[395,340,16],[400,320,16],[1032,218,4],[1042,242,4],[953,260,4.5],[440,295,4],[457,330,7],[327,295,6],[321,320,4],[1085,385,4,1],[1102,345,12,.05],[431,358,4],[309,370,5],[319,385,6],[341,396,4,.8],[708,412,4,.8],[808,420,8],[437,430,4],[458,440,5],[963,458,5],[1074,482,7],[326,478,6,.8],[313,475,4],[375,505,7,.2],[479,514,4],[747,535,13],[407,562,6],[363,595,4],[383,602,4],[588,568,10],[607,705,18],[627,650,13],[935,615,7],[831,633,6],[410,630,4],[417,652,4],[350,645,6,.7],[345,670,4],[375,680,10],[535,677,6],[759,668,6],[912,672,5],[479,699,4,.7],[530,735,4],[480,798,4],[843,808,4],[534,831,4],[497,860,4],[525,880,4]];
  p4.forEach(function (q) { pie(X(q[0]), Y4(q[1]), q[2], q[2] * 1.9, q[3] || 0); });
  p5.forEach(function (q) { pie(X(q[0]), Y5(q[1]), q[2], q[2] * 1.9, q[3] || 0); });

  el('text', { x: 2345, y: 1202, class: 'legt' }, 'type');
  el('rect', { x: 2346, y: 1222, width: 29, height: 28, fill: '#0f0', stroke: '#222', 'stroke-width': 2 });
  el('rect', { x: 2346, y: 1253, width: 29, height: 28, fill: '#00f', stroke: '#222', 'stroke-width': 2 });
  el('text', { x: 2386, y: 1235, class: 'legl' }, 'LINCS');
  el('text', { x: 2386, y: 1266, class: 'legl' }, 'My Candidates');
}

drawLogo();
drawHeat();
drawMds();
```
